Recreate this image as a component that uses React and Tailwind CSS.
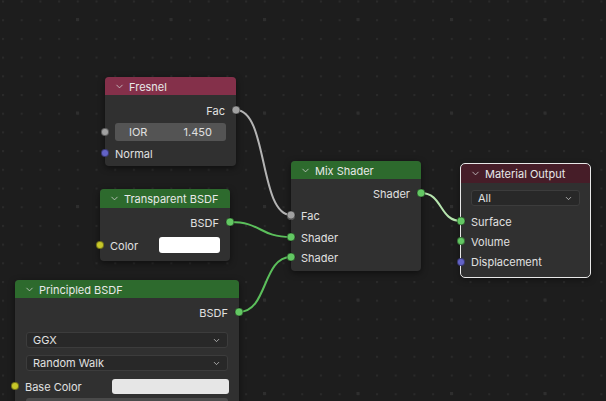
import { ChevronDown } from 'lucide-react';

const SOCKET = {
  gray: 'bg-[#a1a1a1]',
  green: 'bg-[#63c763]',
  yellow: 'bg-[#c7c729]',
  blue: 'bg-[#6363c7]',
};

function Socket({ color, side }) {
  const pos = side === 'left' ? 'left-[-4px]' : 'right-[-4px]';
  return (
    <span
      className={`absolute ${pos} top-1/2 -translate-y-1/2 w-[8px] h-[8px] rounded-full border border-black/40 ${SOCKET[color]}`}
    />
  );
}

function Header({ title, bg }) {
  return (
    <div className={`flex items-center gap-[4px] pl-[9px] rounded-t-[4px] text-[#e8e8e8] ${bg}`}>
      <ChevronDown size={11} strokeWidth={1.75} className="text-[#d0d0d0]" />
      <span className="translate-y-[1px]">{title}</span>
    </div>
  );
}

function OutRow({ label, color, h }) {
  return (
    <div className={`relative flex items-center justify-end pr-[11px] ${h}`}>
      <span className="translate-y-[1px]">{label}</span>
      <Socket color={color} side="right" />
    </div>
  );
}

function InRow({ label, color, h, children }) {
  return (
    <div className={`relative flex items-center pl-[10px] pr-[10px] ${h}`}>
      <span className="flex-1 translate-y-[1px]">{label}</span>
      {children}
      <Socket color={color} side="left" />
    </div>
  );
}

function Dropdown({ label, className }) {
  return (
    <div
      className={`flex items-center justify-between h-[16px] px-[6px] rounded-[3px] bg-[#282828] border border-[#3c3c3c] ${className}`}
    >
      <span>{label}</span>
      <ChevronDown size={9} strokeWidth={2} className="text-[#cfcfcf]" />
    </div>
  );
}

function Node({ x, y, w, selected, children }) {
  return (
    <div
      className={`absolute flex flex-col rounded-[4px] bg-[#303030] shadow-[0_2px_6px_rgba(0,0,0,0.5)] ${
        selected ? 'outline outline-1 outline-[#e8e8e8]' : ''
      }`}
      style={{ left: x, top: y, width: w }}
    >
      {children}
    </div>
  );
}

export default function App() {
  return (
    <div className="relative w-[606px] h-[401px] overflow-hidden bg-[#1d1d1d] font-['Inter','DejaVu_Sans',sans-serif] text-[11px] text-[#e0e0e0]">
      <svg className="absolute inset-0" width="606" height="401">
        <defs>
          <pattern id="dots" x="2" y="0.5" width="18.7" height="18.7" patternUnits="userSpaceOnUse">
            <rect x="0" y="0" width="2" height="2" fill="#2a2a2a" />
          </pattern>
          <pattern id="major" x="76" y="18" width="93.5" height="93.5" patternUnits="userSpaceOnUse">
            <rect x="0" y="0" width="3" height="3" fill="#2e2e2e" />
          </pattern>
        </defs>
        <rect width="606" height="401" fill="url(#dots)" />
        <rect width="606" height="401" fill="url(#major)" />
      </svg>

      {/* Fresnel */}
      <Node x={105} y={77} w={131}>
        <Header title="Fresnel" bg="bg-[#84304a] h-[18px]" />
        <div className="pt-[4px] pb-[3px]">
          <OutRow label="Fac" color="gray" h="h-[22px]" />
          <div className="relative flex items-center h-[22px] px-[10px]">
            <div className="flex-1 flex items-center justify-between h-[18px] px-[14px] rounded-[3px] bg-[#545454]">
              <span>IOR</span>
              <span>1.450</span>
            </div>
            <Socket color="gray" side="left" />
          </div>
          <InRow label="Normal" color="blue" h="h-[20px]" />
        </div>
      </Node>

      {/* Transparent BSDF */}
      <Node x={100} y={189} w={130}>
        <Header title="Transparent BSDF" bg="bg-[#2d6a2d] h-[19px]" />
        <div className="pt-[3px] pb-[4px]">
          <OutRow label="BSDF" color="green" h="h-[22px]" />
          <InRow label="Color" color="yellow" h="h-[24px]">
            <div className="w-[61px] h-[16px] rounded-[3px] bg-white" />
          </InRow>
        </div>
      </Node>

      {/* Mix Shader */}
      <Node x={291} y={161} w={130}>
        <Header title="Mix Shader" bg="bg-[#2d6a2d] h-[18px]" />
        <div className="pt-[3px] pb-[4px]">
          <OutRow label="Shader" color="green" h="h-[22px]" />
          <InRow label="Fac" color="gray" h="h-[23px]" />
          <InRow label="Shader" color="green" h="h-[20px]" />
          <InRow label="Shader" color="green" h="h-[20px]" />
        </div>
      </Node>

      {/* Material Output */}
      <Node x={461} y={164} w={129} selected>
        <Header title="Material Output" bg="bg-[#461d28] h-[19px]" />
        <div className="pt-[7px] pb-[5px]">
          <div className="px-[10px]">
            <Dropdown label="All" />
          </div>
          <div className="mt-[5px]">
            <InRow label="Surface" color="green" h="h-[20px]" />
            <InRow label="Volume" color="green" h="h-[20px]" />
            <InRow label="Displacement" color="blue" h="h-[21px]" />
          </div>
        </div>
      </Node>

      {/* Principled BSDF */}
      <Node x={15} y={280} w={224}>
        <Header title="Principled BSDF" bg="bg-[#2d6a2d] h-[18px]" />
        <div className="pt-[3px]">
          <OutRow label="BSDF" color="green" h="h-[22px]" />
          <div className="px-[11px] pt-[9px] flex flex-col gap-[7px]">
            <Dropdown label="GGX" />
            <Dropdown label="Random Walk" />
          </div>
          <div className="mt-[5px]">
            <InRow label="Base Color" color="yellow" h="h-[20px]">
              <div className="w-[117px] h-[15px] rounded-[3px] bg-[#e6e6e6]" />
            </InRow>
          </div>
          <div className="px-[11px] pt-[2px]">
            <div className="h-[18px] rounded-[3px] bg-[#4a4a4a]" />
          </div>
        </div>
      </Node>

      {/* Links */}
      <svg className="absolute inset-0 pointer-events-none" width="606" height="401">
        <path d="M236,110 C268,110 259,215 291,215" fill="none" stroke="#b4b4b4" strokeWidth="2" />
        <path d="M230,222 C262,222 259,237 291,237" fill="none" stroke="#5bbf5b" strokeWidth="2" />
        <path d="M239,312 C268,312 262,257 291,257" fill="none" stroke="#5bbf5b" strokeWidth="2" />
        <path d="M421,193 C443,193 439,221 461,221" fill="none" stroke="#1d1d1d" strokeWidth="4" />
        <path d="M421,193 C443,193 439,221 461,221" fill="none" stroke="#b6e4ae" strokeWidth="2" />
        <circle cx="236" cy="110" r="4" fill="#a1a1a1" stroke="#000" strokeOpacity="0.4" />
        <circle cx="291" cy="215" r="4" fill="#a1a1a1" stroke="#000" strokeOpacity="0.4" />
        <circle cx="230" cy="222" r="4" fill="#63c763" stroke="#000" strokeOpacity="0.4" />
        <circle cx="291" cy="237" r="4" fill="#63c763" stroke="#000" strokeOpacity="0.4" />
        <circle cx="239" cy="312" r="4" fill="#63c763" stroke="#000" strokeOpacity="0.4" />
        <circle cx="291" cy="257" r="4" fill="#63c763" stroke="#000" strokeOpacity="0.4" />
        <circle cx="421" cy="193" r="4" fill="#63c763" stroke="#000" strokeOpacity="0.4" />
        <circle cx="461" cy="221" r="4" fill="#63c763" stroke="#000" strokeOpacity="0.4" />
      </svg>
    </div>
  );
}
